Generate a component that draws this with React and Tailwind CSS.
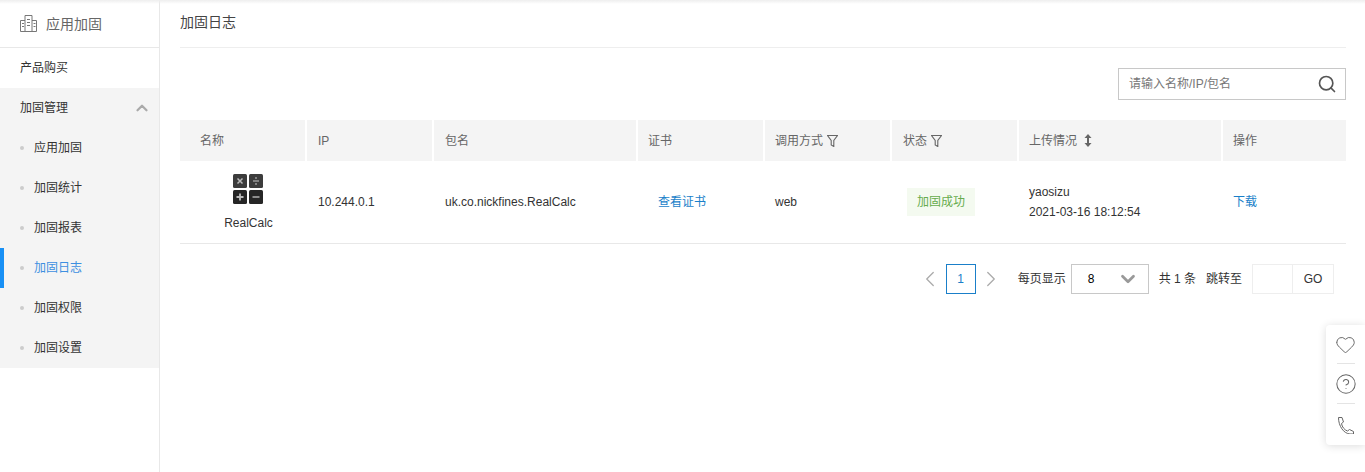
import { ChevronUp, ChevronDown, ChevronLeft, ChevronRight, Search, Heart, CircleHelp } from 'lucide-react';

const FONT = "font-['Liberation_Sans','Noto_Sans_CJK_SC',sans-serif]";

const BuildingIcon = () => (
  <svg width="17" height="17" viewBox="0 0 17 17" fill="none" stroke="#777" strokeWidth="1">
    <path d="M.5 16.500V5.500h4.500M16.500 16.500V5.500h-4.500M5 16.500V.5h7v16M.5 16.500h16" />
    <path d="M2 8.500h2M2 11.500h2M7 4.500h3M7 7.500h3M7 10.500h3M13.500 8.500h2M13.500 11.500h2" />
  </svg>
);

const FilterIcon = () => (
  <svg width="11" height="12" viewBox="0 0 11 12" fill="none" stroke="#666" strokeWidth="1.100">
    <path d="M.5.5h10L6.800 5.500v6L4.200 10V5.500z" />
  </svg>
);

const SortIcon = () => (
  <svg width="8" height="13" viewBox="0 0 8 13" fill="#666">
    <path d="M4 0 7.500 4H5v5h2.500L4 13 .5 9H3V4H.5z" />
  </svg>
);

const PhoneIcon = () => (
  <svg width="18" height="18" viewBox="0 0 18 18" fill="none" stroke="#666" strokeWidth="1">
    <path d="M1.500 1.500h3.500l1.500 4.500-2 1.500c.5 3.500 3 6.500 6 7.500l2-1.500 4 2v2.500h-3.500C6.500 17.500 1.500 10 1.500 1.500z" />
  </svg>
);

const CalcIcon = () => (
  <svg width="30" height="30" viewBox="0 0 30 30" className="blur-[0.4px]">
    <rect x="0" y="0" width="14" height="14" rx="1.500" fill="#3c3c3c" />
    <rect x="16" y="0" width="14" height="14" rx="1.500" fill="#3c3c3c" />
    <rect x="0" y="16" width="14" height="14" rx="1.500" fill="#262626" />
    <rect x="16" y="16" width="14" height="14" rx="1.500" fill="#262626" />
    <path d="M4.500 4.500l5 5M9.500 4.500l-5 5" stroke="#bbb" strokeWidth="1.500" />
    <path d="M20 7h6" stroke="#999" strokeWidth="1.500" />
    <circle cx="23" cy="4" r="1" fill="#999" />
    <circle cx="23" cy="10" r="1" fill="#999" />
    <path d="M3.500 23h7M7 19.500v7" stroke="#bbb" strokeWidth="1.800" />
    <path d="M19.500 23h7" stroke="#999" strokeWidth="1.800" />
  </svg>
);

const subItems = ['应用加固', '加固统计', '加固报表', '加固日志', '加固权限', '加固设置'];

const Sidebar = () => (
  <aside className="w-40 shrink-0 border-r border-[#e8e8e8] h-full">
    <div className="h-12 flex items-center pl-5 border-b border-[#e8e8e8] text-sm text-[#666]">
      <BuildingIcon />
      <span className="ml-[9px]">应用加固</span>
    </div>
    <div className="h-10 flex items-center pl-5 text-xs text-[#333]">产品购买</div>
    <div className="bg-[#f4f4f4]">
      <div className="h-10 flex items-center justify-between pl-5 pr-2 text-xs text-[#333]">
        加固管理
        <ChevronUp size={18} strokeWidth={3} className="text-[#aaa]" />
      </div>
      {subItems.map((item) => {
        const active = item === '加固日志';
        return (
          <div key={item} className={`h-10 flex items-center pl-5 text-xs relative ${active ? 'text-[#3d8fe0]' : 'text-[#333]'}`}>
            {active && <span className="absolute left-0 top-0 h-10 w-1 bg-[#1890f5]" />}
            <span className="w-1 h-1 rounded-full bg-[#ccc] mr-2.5" />
            {item}
          </div>
        );
      })}
    </div>
  </aside>
);

const COLS = 'grid grid-cols-[127px_127px_204px_127px_127px_127px_204px_123px]';

const HeadCell = ({ children, className = 'pl-2.5', last }) => (
  <div className={`h-[41px] flex items-center gap-1 bg-[#f4f4f4] text-[#666] ${last ? '' : 'border-r-2 border-white'} ${className}`}>
    {children}
  </div>
);

const Table = () => (
  <div className="text-xs">
    <div className={COLS}>
      <HeadCell className="pl-5">名称</HeadCell>
      <HeadCell className="pl-[11px]">IP</HeadCell>
      <HeadCell className="pl-[11px]">包名</HeadCell>
      <HeadCell>证书</HeadCell>
      <HeadCell>调用方式<FilterIcon /></HeadCell>
      <HeadCell className="pl-[11px]">状态<FilterIcon /></HeadCell>
      <HeadCell>
        上传情况
        <span className="ml-[3px] flex"><SortIcon /></span>
      </HeadCell>
      <HeadCell last>操作</HeadCell>
    </div>
    <div className={`${COLS} h-[83px] items-center border-b border-[#e8e8e8] text-[#333]`}>
      <div className="flex flex-col items-center w-[137px] -mr-2.5">
        <span className="ml-[-2px] flex"><CalcIcon /></span>
        <span className="mt-3 leading-[14px]">RealCalc</span>
      </div>
      <div className="pl-[11px]">10.244.0.1</div>
      <div className="pl-[11px]">uk.co.nickfines.RealCalc</div>
      <div className="pl-5 text-[#1a7fc9]">查看证书</div>
      <div className="pl-2.5">web</div>
      <div className="pl-[15px]">
        <span className="inline-flex items-center justify-center w-[68px] h-7 bg-[#f4faf0] text-[#67ac4d]">加固成功</span>
      </div>
      <div className="pl-2.5 leading-5">
        <div>yaosizu</div>
        <div>2021-03-16 18:12:54</div>
      </div>
      <div className="pl-2.5 text-[#1a7fc9]">下载</div>
    </div>
  </div>
);

const Pagination = () => (
  <div className="mt-5 flex items-center justify-end h-[30px] pr-3 text-xs text-[#333]">
    <ChevronLeft size={26} strokeWidth={1.200} className="text-[#aaa]" />
    <span className="ml-[3px] w-[30px] h-[30px] flex items-center justify-center border border-[#1a7fc9] text-[#1a7fc9]">1</span>
    <ChevronRight size={26} strokeWidth={1.200} className="text-[#aaa] ml-[2px]" />
    <span className="ml-[14px]">每页显示</span>
    <div className="ml-[5px] w-[78px] h-[30px] border border-[#c8c8c8] flex items-center justify-between pl-4 pr-[9px] text-black">
      8
      <ChevronDown size={22} strokeWidth={3} className="text-[#999]" />
    </div>
    <span className="ml-[10px]">共 1 条</span>
    <span className="ml-[10px]">跳转至</span>
    <div className="ml-[10px] w-[82px] h-[30px] border border-[#eee] flex">
      <span className="w-10 border-r border-[#eee]" />
      <span className="flex-1 flex items-center justify-center">GO</span>
    </div>
  </div>
);

const FloatPanel = () => (
  <div className="absolute right-0 top-[325px] w-[39px] h-[120px] bg-white rounded-l-sm shadow-[0_1px_8px_rgba(0,0,0,0.14)] flex flex-col items-center text-[#666]">
    <div className="h-[39px] w-[18px] flex items-center justify-center border-b border-[#e4e4e4]">
      <Heart size={21} strokeWidth={1.100} className="shrink-0" />
    </div>
    <div className="h-10 w-[18px] flex items-center justify-center border-b border-[#e4e4e4]">
      <CircleHelp size={22} strokeWidth={1.100} className="shrink-0" />
    </div>
    <div className="flex-1 flex items-center justify-center">
      <PhoneIcon />
    </div>
  </div>
);

export default function App() {
  return (
    <div className={`${FONT} relative h-[472px] w-[1365px] overflow-hidden bg-white flex`}>
      <div className="absolute left-0 right-0 top-0 h-1 bg-gradient-to-b from-[#eee] to-transparent" />
      <Sidebar />
      <main className="flex-1 pl-5 pr-[19px]">
        <div className="h-12 flex items-center pb-1 border-b border-[#eee] text-sm text-[#444]">加固日志</div>
        <div className="mt-5 flex justify-end">
          <div className="w-[228px] h-8 border border-[#c8c8c8] flex items-center justify-between pl-2.5 pr-2 text-xs text-[#777]">
            请输入名称/IP/包名
            <Search size={20} strokeWidth={2} className="text-[#555]" />
          </div>
        </div>
        <div className="mt-5">
          <Table />
        </div>
        <Pagination />
      </main>
      <FloatPanel />
    </div>
  );
}
